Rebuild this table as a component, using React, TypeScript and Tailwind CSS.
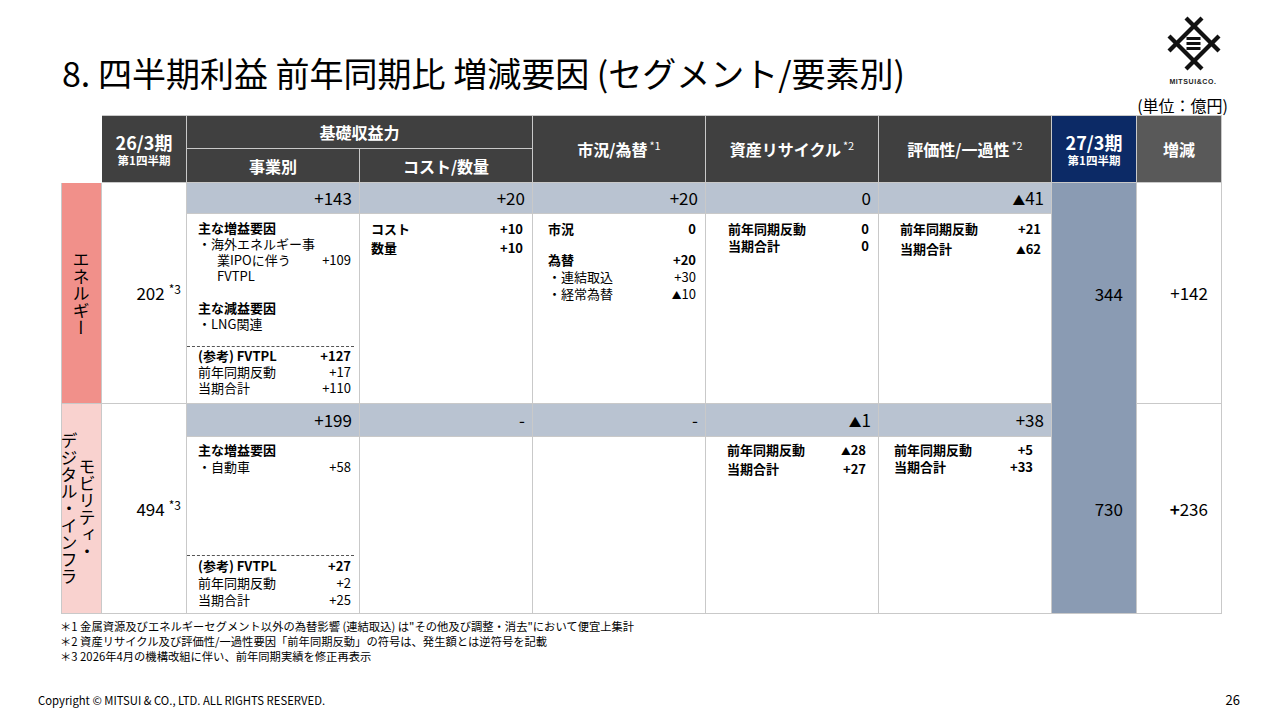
import clsx from "clsx"

function Num({ v }: { v: string }) {
    if (v.startsWith("▲")) {
        return (
            <span>
                <span className="text-[0.75em]">▲</span>
                {v.slice(1)}
            </span>
        )
    }
    return <span>{v}</span>
}

interface PairProps {
    l: React.ReactNode
    r?: string
    b?: boolean
    className?: string
}

function Pair({ l, r, b, className }: PairProps) {
    return (
        <div className={clsx("flex justify-between", b && "font-bold", className)}>
            <span>{l}</span>
            {r && <Num v={r} />}
        </div>
    )
}

function Logo() {
    return (
        <div className="flex flex-col items-center w-[60px]">
            <svg width="60" height="62" viewBox="0 0 60 62">
                <g stroke="#111" strokeWidth="4.2" fill="none">
                    <line x1="23" y1="5" x2="56" y2="38" />
                    <line x1="6" y1="23" x2="39" y2="56" />
                    <line x1="39" y1="5" x2="6" y2="38" />
                    <line x1="56" y1="23" x2="23" y2="56" />
                </g>
                <g fill="#111">
                    <rect x="23.5" y="24" width="14" height="3" />
                    <rect x="23.5" y="29" width="14" height="3" />
                    <rect x="23.5" y="34" width="14" height="3" />
                </g>
            </svg>
            <span className="font-['Liberation_Sans',sans-serif] font-bold text-[7px] leading-[9px] tracking-[0.6px] text-[#222] mt-[2px]">MITSUI&amp;CO.</span>
        </div>
    )
}

function Sup({ children }: { children: React.ReactNode }) {
    return <span className="font-normal text-[11px] align-super ml-[2px]">{children}</span>
}

function Summary({ col, row, v }: { col: string; row: string; v: string }) {
    return (
        <div className={clsx(col, row, "bg-[#b9c3d1] flex items-center justify-end pr-[7px] text-[17px]")}>
            <Num v={v} />
        </div>
    )
}

export default function App() {
    return (
        <div className="w-[1280px] h-[720px] bg-white flex flex-col text-black font-['Noto_Sans_CJK_JP','Liberation_Sans',sans-serif]">
            {/* header */}
            <div className="h-[95px] flex justify-between items-start pl-[62px] pr-[57px] pt-[13px]">
                <h1 className="mt-[39px] text-[34px] leading-[42px] font-normal">
                    8. 四半期利益 前年同期比 増減要因 (セグメント/要素別)
                </h1>
                <Logo />
            </div>
            <div className="h-[20px] flex justify-end pr-[52px] text-[16px] leading-[20px]">(単位：億円)</div>

            {/* table */}
            <div className="pl-[61px]">
                <div className="w-fit grid gap-px bg-[#c9c9c9] border border-[#c9c9c9] grid-cols-[39px_84px_172px_172px_172px_172px_172px_84px_84px] grid-rows-[32px_33px_30px_189px_32px_176px]">
                    <div className="col-start-1 row-start-1 row-span-2 bg-white -m-px" />
                    <div className="col-start-2 row-start-1 row-span-2 bg-[#404040] text-white font-bold flex flex-col items-center justify-center">
                        <span className="text-[18px] leading-[22px]">26/3期</span>
                        <span className="text-[11.5px] leading-[15px]">第1四半期</span>
                    </div>
                    <div className="col-start-3 col-span-2 row-start-1 bg-[#404040] text-white font-bold text-[16px] flex items-center justify-center">基礎収益力</div>
                    <div className="col-start-3 row-start-2 bg-[#404040] text-white font-bold text-[16px] flex items-center justify-center">事業別</div>
                    <div className="col-start-4 row-start-2 bg-[#404040] text-white font-bold text-[16px] flex items-center justify-center">コスト/数量</div>
                    <div className="col-start-5 row-start-1 row-span-2 bg-[#404040] text-white font-bold text-[16px] flex items-center justify-center">
                        <span>市況/為替<Sup>*1</Sup></span>
                    </div>
                    <div className="col-start-6 row-start-1 row-span-2 bg-[#404040] text-white font-bold text-[16px] flex items-center justify-center">
                        <span>資産リサイクル<Sup>*2</Sup></span>
                    </div>
                    <div className="col-start-7 row-start-1 row-span-2 bg-[#404040] text-white font-bold text-[16px] flex items-center justify-center">
                        <span>評価性/一過性<Sup>*2</Sup></span>
                    </div>
                    <div className="col-start-8 row-start-1 row-span-2 bg-[#0c2a66] text-white font-bold flex flex-col items-center justify-center">
                        <span className="text-[18px] leading-[22px]">27/3期</span>
                        <span className="text-[11.5px] leading-[15px]">第1四半期</span>
                    </div>
                    <div className="col-start-9 row-start-1 row-span-2 bg-[#595959] text-white font-bold text-[16px] flex items-center justify-center">増減</div>

                    {/* エネルギー */}
                    <div className="col-start-1 row-start-3 row-span-2 bg-[#f1908a] flex items-center justify-center pr-[2px]">
                        <span className="[writing-mode:vertical-rl] text-[17px] leading-[18px]">エネルギー</span>
                    </div>
                    <div className="col-start-2 row-start-3 row-span-2 bg-white flex items-center justify-end pr-[5px] text-[17px]">
                        <span>202<span className="text-[12px] align-top ml-[4px]">*3</span></span>
                    </div>
                    <Summary col="col-start-3" row="row-start-3" v="+143" />
                    <Summary col="col-start-4" row="row-start-3" v="+20" />
                    <Summary col="col-start-5" row="row-start-3" v="+20" />
                    <Summary col="col-start-6" row="row-start-3" v="0" />
                    <Summary col="col-start-7" row="row-start-3" v="▲41" />

                    <div className="col-start-3 row-start-4 bg-white flex flex-col text-[13px] leading-[16px]">
                        <div className="pt-[6px] pl-[11px] pr-[8px]">
                            <div className="font-bold">主な増益要因</div>
                            <div>・海外エネルギー事</div>
                            <Pair l="業IPOに伴う" r="+109" className="pl-[19px]" />
                            <div className="pl-[19px]">FVTPL</div>
                            <div className="h-[16px]" />
                            <div className="font-bold">主な減益要因</div>
                            <div>・LNG関連</div>
                        </div>
                        <div className="mt-auto mr-[5px] border-t border-dashed border-[#555] pt-[1px] pb-[7px] pl-[11px] pr-[3px]">
                            <Pair l="(参考) FVTPL" r="+127" b />
                            <Pair l="前年同期反動" r="+17" />
                            <Pair l="当期合計" r="+110" />
                        </div>
                    </div>
                    <div className="col-start-4 row-start-4 bg-white pt-[5px] pl-[11px] pr-[9px] text-[13px] leading-[19px]">
                        <Pair l="コスト" r="+10" b />
                        <Pair l="数量" r="+10" b />
                    </div>
                    <div className="col-start-5 row-start-4 bg-white pt-[6px] pl-[15px] pr-[9px] text-[13px] leading-[17px]">
                        <Pair l="市況" r="0" b />
                        <div className="h-[14px]" />
                        <Pair l="為替" r="+20" b />
                        <Pair l="・連結取込" r="+30" />
                        <Pair l="・経常為替" r="▲10" />
                    </div>
                    <div className="col-start-6 row-start-4 bg-white pt-[6px] pl-[22px] pr-[9px] text-[13px] leading-[17px]">
                        <Pair l="前年同期反動" r="0" b />
                        <Pair l="当期合計" r="0" b />
                    </div>
                    <div className="col-start-7 row-start-4 bg-white pt-[5px] pl-[21px] pr-[10px] text-[13px] leading-[20px]">
                        <Pair l="前年同期反動" r="+21" b />
                        <Pair l="当期合計" r="▲62" b />
                    </div>

                    <div className="col-start-8 row-start-3 row-span-4 bg-[#8a9bb3] flex flex-col text-[17px]">
                        <div className="h-[221px] flex items-center justify-end pr-[13px]">344</div>
                        <div className="flex-1 flex items-center justify-end pr-[13px]">730</div>
                    </div>
                    <div className="col-start-9 row-start-3 row-span-2 bg-white flex items-center justify-end pr-[13px] text-[17px]">+142</div>

                    {/* モビリティ */}
                    <div className="col-start-1 row-start-5 row-span-2 bg-[#f9d2cf] flex items-center justify-center pr-[8px]">
                        <span className="[writing-mode:vertical-rl] text-[17px] leading-[18px] text-center">
                            モビリティ・<br />デジタル・インフラ
                        </span>
                    </div>
                    <div className="col-start-2 row-start-5 row-span-2 bg-white flex items-center justify-end pr-[5px] text-[17px]">
                        <span>494<span className="text-[12px] align-top ml-[4px]">*3</span></span>
                    </div>
                    <Summary col="col-start-3" row="row-start-5" v="+199" />
                    <Summary col="col-start-4" row="row-start-5" v="-" />
                    <Summary col="col-start-5" row="row-start-5" v="-" />
                    <Summary col="col-start-6" row="row-start-5" v="▲1" />
                    <Summary col="col-start-7" row="row-start-5" v="+38" />

                    <div className="col-start-3 row-start-6 bg-white flex flex-col text-[13px] leading-[17px]">
                        <div className="pt-[4px] pl-[11px] pr-[8px]">
                            <div className="font-bold">主な増益要因</div>
                            <Pair l="・自動車" r="+58" />
                        </div>
                        <div className="mt-auto mr-[5px] border-t border-dashed border-[#555] pt-[1px] pb-[5px] pl-[11px] pr-[3px]">
                            <Pair l="(参考) FVTPL" r="+27" b />
                            <Pair l="前年同期反動" r="+2" />
                            <Pair l="当期合計" r="+25" />
                        </div>
                    </div>
                    <div className="col-start-4 row-start-6 bg-white" />
                    <div className="col-start-5 row-start-6 bg-white" />
                    <div className="col-start-6 row-start-6 bg-white pt-[4px] pl-[21px] pr-[12px] text-[13px] leading-[17px]">
                        <Pair l="前年同期反動" r="▲28" b />
                        <Pair l="当期合計" r="+27" b />
                    </div>
                    <div className="col-start-7 row-start-6 bg-white pt-[4px] pl-[15px] pr-[18px] text-[13px] leading-[17px]">
                        <Pair l="前年同期反動" r="+5" b />
                        <Pair l="当期合計" r="+33" b />
                    </div>
                    <div className="col-start-9 row-start-5 row-span-2 bg-white flex items-center justify-end pr-[13px] text-[17px]">
                        <span><span className="font-bold">+</span>236</span>
                    </div>
                </div>
            </div>

            {/* footnotes */}
            <div className="pl-[60px] pt-[5px] text-[11.3px] leading-[15px]">
                <div>＊1 金属資源及びエネルギーセグメント以外の為替影響 (連結取込) は"その他及び調整・消去"において便宜上集計</div>
                <div>＊2 資産リサイクル及び評価性/一過性要因「前年同期反動」の符号は、発生額とは逆符号を記載</div>
                <div>＊3 2026年4月の機構改組に伴い、前年同期実績を修正再表示</div>
            </div>

            {/* footer */}
            <div className="mt-auto flex justify-between items-center pl-[38px] pr-[40px] pb-[12px] h-[28px]">
                <span className="text-[11.3px]">Copyright © MITSUI &amp; CO., LTD. ALL RIGHTS RESERVED.</span>
                <span className="text-[13px]">26</span>
            </div>
        </div>
    )
}
